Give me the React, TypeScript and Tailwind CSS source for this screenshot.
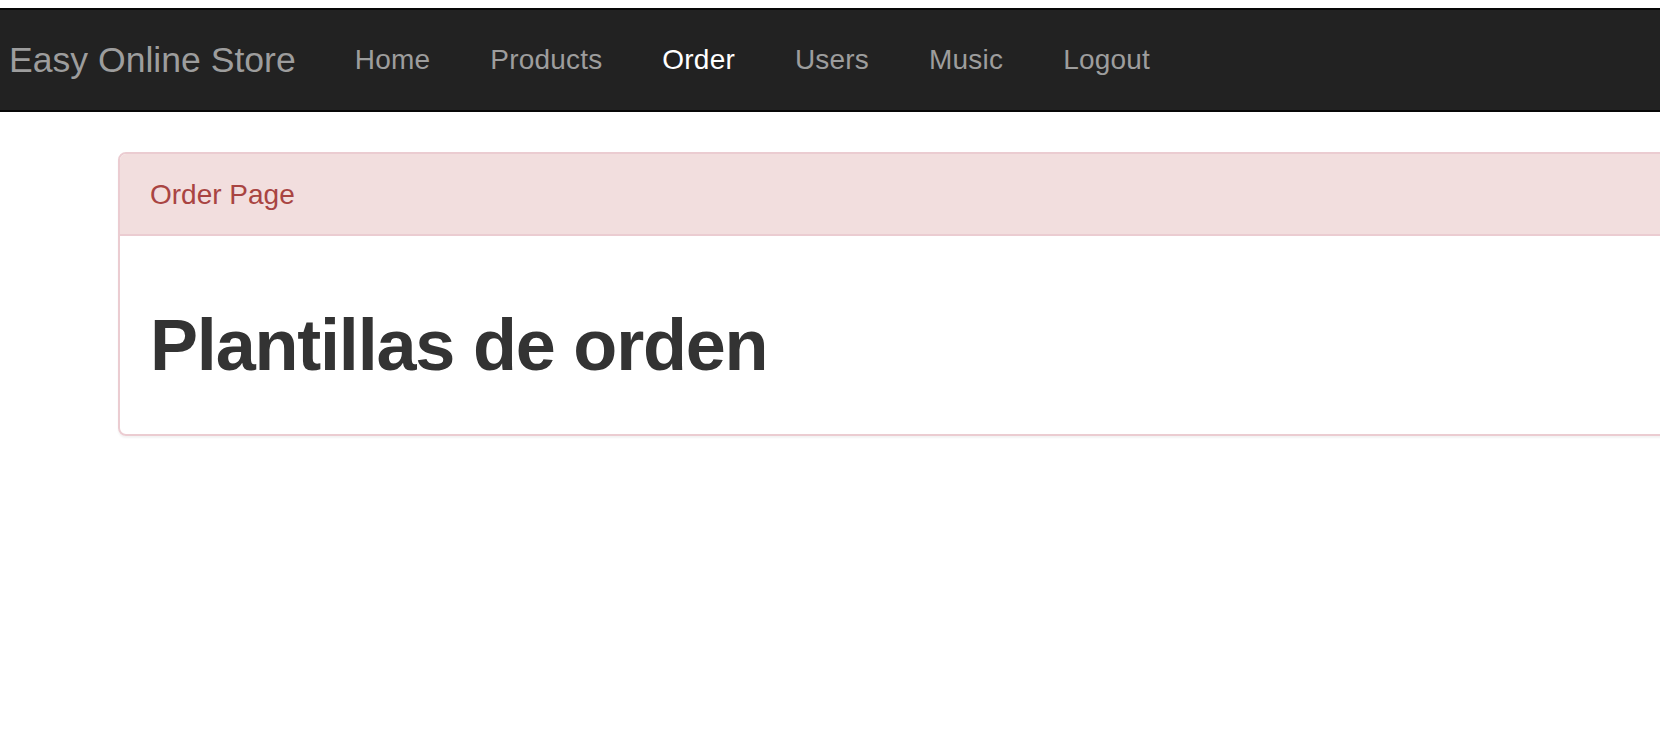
import React from "react";

const links = [
  { label: "Home", active: false },
  { label: "Products", active: false },
  { label: "Order", active: true },
  { label: "Users", active: false },
  { label: "Music", active: false },
  { label: "Logout", active: false },
];

const font = { fontFamily: '"Liberation Sans", Helvetica, Arial, sans-serif' };

export default function App() {
  return (
    <div className="w-full min-h-[752px] bg-white overflow-hidden pt-[8px]" style={font}>
      {/* Navbar */}
      <nav className="w-full h-[104px] bg-[#222222] border-y-2 border-[#080808] flex items-start pl-[9px]">
        <a className="text-[35.6px] leading-[40px] pt-[30px] text-[#9d9d9d] mr-[29px] whitespace-nowrap">
          Easy Online Store
        </a>
        <ul className="flex">
          {links.map((l) => (
            <li key={l.label}>
              <a
                className={
                  "block px-[30px] pt-[30px] leading-[40px] text-[28px] tracking-[0.2px] whitespace-nowrap " +
                  (l.active ? "text-white" : "text-[#9d9d9d]")
                }
              >
                {l.label}
              </a>
            </li>
          ))}
        </ul>
      </nav>

      {/* Panel */}
      <div className="mt-[40px] ml-[118px] w-[1600px] border-2 border-[#ebccd1] rounded-[8px] shadow-[0_2px_2px_rgba(0,0,0,0.05)]">
        <div className="h-[82px] bg-[#f2dede] border-b-2 border-[#ebccd1] rounded-t-[6px] px-[30px] flex items-center pt-[2px]">
          <span className="text-[28px] text-[#a94442]">Order Page</span>
        </div>
        <div className="px-[30px] py-[30px]">
          <h1 className="mt-[40px] mb-[20px] text-[72px] leading-[78px] font-bold tracking-[-1.2px] text-[#333333]">
            Plantillas de orden
          </h1>
        </div>
      </div>
    </div>
  );
}
